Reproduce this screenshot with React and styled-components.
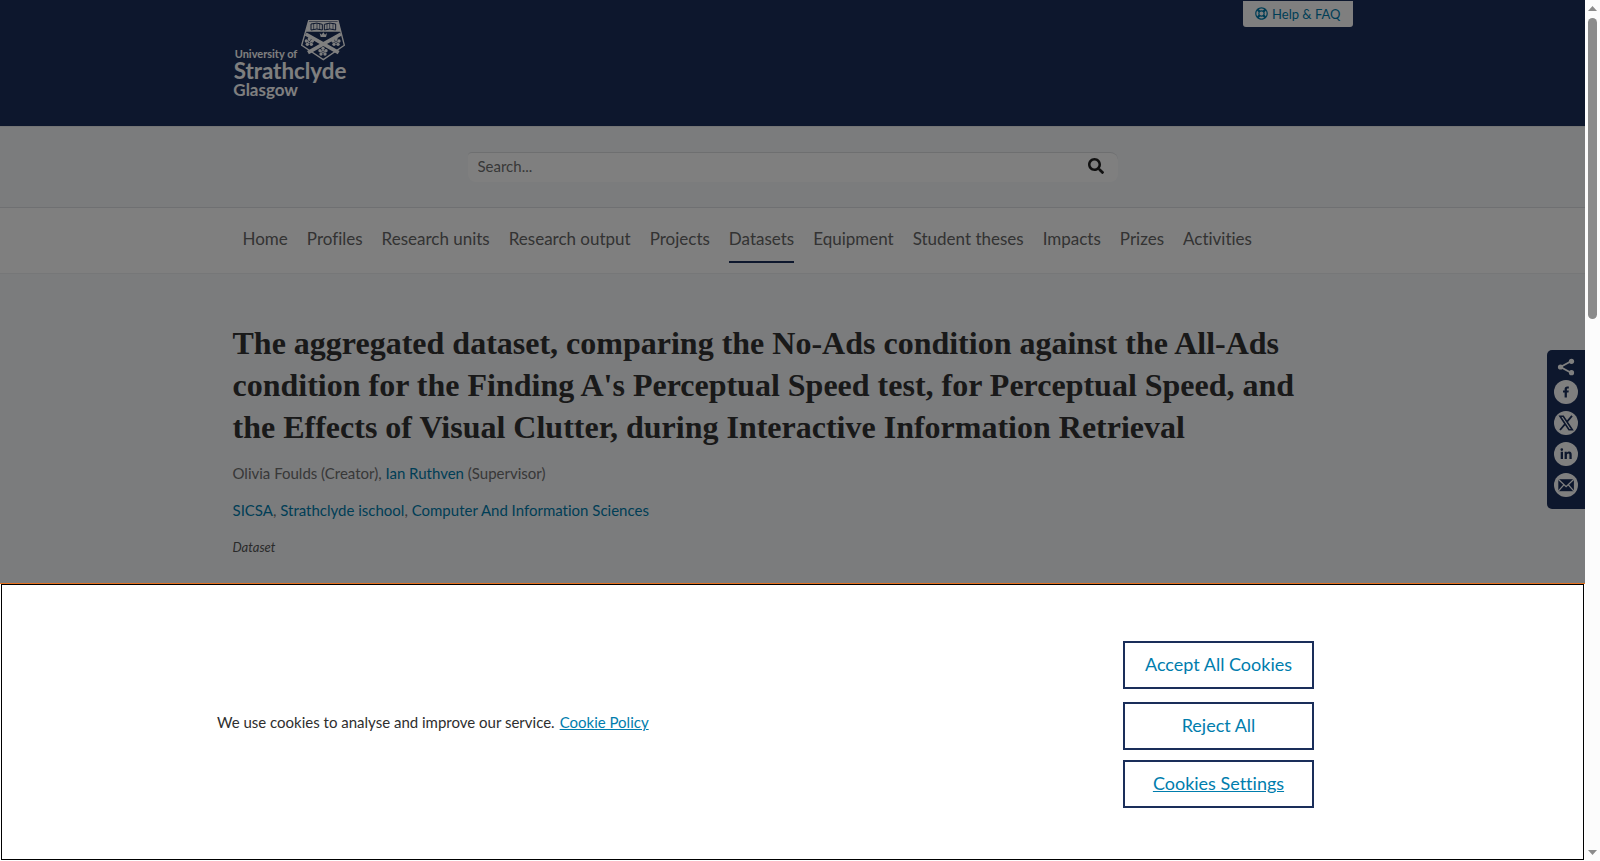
import React, { useState } from 'react';
import styled, { createGlobalStyle } from 'styled-components';
import { FaSearch, FaRegLifeRing } from 'react-icons/fa';

const GlobalStyle = createGlobalStyle`
  * {
    box-sizing: border-box;
  }

  body {
    margin: 0;
    overflow: hidden;
    font-family: Lato, 'Open Sans', sans-serif;
    font-size: 15px;
    font-variant-ligatures: none;
    color: #707070;
  }
`;

const Frame = styled.div`
  display: flex;
  height: 100vh;
`;

const Page = styled.div`
  position: relative;
  flex: 1;
  min-width: 0;
  overflow: hidden;
  background-color: #f6f8fb;
`;

const Container = styled.div`
  max-width: 1120px;
  margin: 0 auto;
`;

const Header = styled.header`
  height: 126px;
  padding-top: 1px;
  background-color: #1a2e5a;
`;

const HeaderRow = styled(Container)`
  display: flex;
  justify-content: space-between;
  align-items: flex-start;
`;

const LogoLink = styled.a`
  display: block;
  padding-top: 17px;
`;

const HelpLink = styled.a`
  display: flex;
  align-items: center;
  gap: 4px;
  height: 26px;
  padding: 0 12px 1px;
  border-radius: 0 0 3px 3px;
  background-color: #fff;
  color: #007dad;
  font-size: 13px;
  line-height: 20px;
  text-decoration: none;
`;

const SearchBand = styled.section`
  padding: 25px 0;
  border-top: 1px solid #e6e8eb;
  border-bottom: 1px solid #dfe1e4;
`;

const SearchForm = styled.form`
  display: flex;
  width: 650px;
  height: 30px;
  margin: 0 auto;
  padding-bottom: 3px;
  border-top: 1px solid #dcdee1;
  border-radius: 4px 8px 8px 8px;
  background-color: #fff;
`;

const SearchInput = styled.input`
  flex: 1;
  padding: 0 10px;
  border: 0;
  background: none;
  font-family: inherit;
  font-size: 15px;

  &::placeholder {
    color: #707070;
    opacity: 1;
  }
`;

const SearchButton = styled.button`
  display: flex;
  align-items: center;
  padding: 0 14px;
  border: 0;
  background: none;
  color: #222;
  cursor: pointer;
`;

const Nav = styled.nav`
  background-color: #fff;
  border-bottom: 1px solid #eceef0;
`;

const NavList = styled(Container).attrs({ as: 'ul' })`
  display: flex;
  gap: 19px;
  height: 65px;
  padding: 0 10px;
  list-style: none;
`;

const NavLink = styled.a`
  display: block;
  height: 55px;
  padding-top: 20px;
  border-bottom: 2px solid ${(props) => (props.$active ? '#1a2e5a' : 'transparent')};
  color: #666;
  font-size: 17px;
  line-height: 22px;
  text-decoration: none;
  white-space: nowrap;
`;

const Article = styled(Container).attrs({ as: 'main' })`
  padding-top: 48px;
`;

const Title = styled.h1`
  margin: 0 0 14px;
  color: #333;
  font-family: 'Liberation Serif', serif;
  font-size: 32px;
  font-weight: bold;
  line-height: 42px;
`;

const TitleLine = styled.span`
  display: block;
  white-space: nowrap;
`;

const Meta = styled.p`
  margin: 0 0 15px;
  line-height: 22px;
`;

const MetaLink = styled.a`
  color: #007dad;
  text-decoration: none;
`;

const Kind = styled(Meta)`
  color: #555;
  font-size: 13px;
  font-style: italic;
`;

const Share = styled.aside`
  position: absolute;
  top: 350px;
  right: 0;
  display: flex;
  flex-direction: column;
  align-items: center;
  gap: 1px;
  width: 38px;
  padding: 5px 0 12px;
  border-radius: 5px 0 0 5px;
  background-color: #1a2e5a;
`;

const ShareLinks = styled.div`
  display: flex;
  flex-direction: column;
  gap: 7px;
`;

const ShareLink = styled.a`
  display: block;
  height: 24px;
`;

const Overlay = styled.div`
  position: absolute;
  inset: 0;
  background-color: rgba(0, 0, 0, 0.5);
`;

const Banner = styled.section`
  position: absolute;
  right: 0;
  bottom: 0;
  left: 0;
  padding: 0 1px 1px;
  border-top: 1px solid #e9711c;
  background-color: #fff;
`;

const BannerBody = styled.div`
  display: flex;
  justify-content: space-between;
  align-items: center;
  padding: 56px 269px 51px 215px;
  border: 1px solid #000;
  color: #2e2e2e;
`;

const BannerText = styled.p`
  margin: 0 0 5px;
  line-height: 22px;
`;

const PolicyLink = styled.a`
  margin-left: 5px;
  color: #007dad;
`;

const BannerActions = styled.div`
  display: flex;
  flex-direction: column;
  gap: 10px;
  width: 191px;
`;

const ConsentButtons = styled.div`
  display: flex;
  flex-direction: column;
  gap: 13px;
`;

const BannerButton = styled.button`
  height: 48px;
  padding: 0 6px 2px;
  border: 2px solid #1a2e5a;
  background-color: #fff;
  color: #007dad;
  font-family: inherit;
  font-size: 18px;
  font-variant-ligatures: none;
  text-decoration: ${(props) => (props.$underlined ? 'underline' : 'none')};
  cursor: pointer;
`;

const Scrollbar = styled.div`
  display: flex;
  flex-direction: column;
  align-items: center;
  width: 15px;
  padding: 6px 0;
  background-color: #fcfcfc;
`;

const Thumb = styled.div`
  width: 9px;
  height: 301px;
  margin: 7px 0 auto;
  border-radius: 5px;
  background-color: #8b8b8b;
`;

const navItems = [
  'Home',
  'Profiles',
  'Research units',
  'Research output',
  'Projects',
  'Datasets',
  'Equipment',
  'Student theses',
  'Impacts',
  'Prizes',
  'Activities',
];

const Logo = () => (
  <svg width="120" height="90" viewBox="39 24 360 270" role="img" aria-label="University of Strathclyde Glasgow">
    <g fill="#fff" fontFamily="Lato, sans-serif" fontWeight="700">
      <text x="44" y="144" fontSize="33">University of</text>
      <text x="41" y="207" fontSize="67">Strathclyde</text>
      <text x="40" y="258" fontSize="51">Glasgow</text>
    </g>
    <path d="M266 32H354L373 106L310 149L245 106Z" fill="none" stroke="#fff" strokeWidth="4" />
    <path d="M265 35H355L363 65H257Z" fill="#fff" />
    <path
      d="M273 42Q291 36 307 43V60Q291 54 273 60ZM313 43Q329 36 347 42V60Q329 54 313 60Z"
      fill="none"
      stroke="#1a2e5a"
      strokeWidth="3"
    />
    <path d="M281 40V58M291 39V57M299 40V58M321 40V58M329 39V57M339 40V58" stroke="#1a2e5a" strokeWidth="2" />
    <path d="M257 72L356 128M363 72L264 128" stroke="#fff" strokeWidth="11" />
    <path d="M299 69L305 74L310 67L315 74L321 69L318 81H302Z" fill="#fff" />
    {[[268, 95], [348, 95], [309, 124]].map(([x, y]) => (
      <g key={x} transform={`translate(${x} ${y})`} fill="#fff">
        <circle cx="0" cy="-9" r="5" />
        <circle cx="9" cy="-2" r="5" />
        <circle cx="6" cy="8" r="5" />
        <circle cx="-6" cy="8" r="5" />
        <circle cx="-9" cy="-2" r="5" />
        <circle r="5" />
        <circle r="2" fill="#1a2e5a" />
      </g>
    ))}
  </svg>
);

const ShareIcon = () => (
  <svg width="24" height="24" viewBox="0 0 24 24" aria-hidden="true">
    <path d="M17.5 6L6.5 12L17.5 18" fill="none" stroke="#fff" strokeWidth="1.8" />
    <circle cx="17.5" cy="6.3" r="2.6" fill="#fff" />
    <circle cx="6.5" cy="12" r="2.6" fill="#fff" />
    <circle cx="17.5" cy="17.7" r="2.6" fill="#fff" />
  </svg>
);

const shareTargets = [
  {
    name: 'Facebook',
    icon: (
      <path
        d="M10.6 17.5V12.6H9V10.5H10.6V9.2C10.6 7.4 11.6 6.4 13.3 6.4H14.8V8.4H13.8C13.1 8.4 12.9 8.7 12.9 9.3V10.5H14.8L14.5 12.6H12.9V17.5Z"
        fill="#1a2e5a"
      />
    ),
  },
  {
    name: 'X',
    icon: (
      <g fill="none" stroke="#1a2e5a">
        <path d="M18 4.8L6 19" strokeWidth="1.8" />
        <path d="M6 5.3H9.3L18.3 18.7H15Z" fill="#fff" strokeWidth="1.6" />
      </g>
    ),
  },
  {
    name: 'LinkedIn',
    icon: (
      <path
        d="M6.7 9.8H9V17H6.7ZM7.8 6.2A1.3 1.3 0 1 1 7.8 8.9A1.3 1.3 0 1 1 7.8 6.2ZM10.6 9.8H12.8V10.8C13.3 10 14.1 9.6 15 9.6C17.2 9.6 17.7 11 17.7 13V17H15.4V13.4C15.4 12.4 15.3 11.6 14.3 11.6C13.3 11.6 12.9 12.3 12.9 13.4V17H10.6Z"
        fill="#1a2e5a"
      />
    ),
  },
  {
    name: 'Email',
    icon: (
      <>
        <rect x="4.3" y="6.2" width="15.6" height="12" fill="#1a2e5a" />
        <path
          d="M4.3 6.2L12.1 13.7L19.9 6.2M4.3 18.2L9.8 11.8M19.9 18.2L14.4 11.8"
          fill="none"
          stroke="#fff"
          strokeWidth="1.3"
        />
      </>
    ),
  },
];

const App = () => {
  const [query, setQuery] = useState('');

  const handleSubmit = (event) => {
    event.preventDefault();
  };

  return (
    <Frame>
      <GlobalStyle />
      <Page>
        <Header>
          <HeaderRow>
            <LogoLink href="#home">
              <Logo />
            </LogoLink>
            <HelpLink href="#help">
              <FaRegLifeRing size={13} aria-hidden="true" />
              Help &amp; FAQ
            </HelpLink>
          </HeaderRow>
        </Header>

        <SearchBand>
          <SearchForm role="search" onSubmit={handleSubmit}>
            <SearchInput
              type="text"
              aria-label="Search"
              placeholder="Search..."
              value={query}
              onChange={(e) => setQuery(e.target.value)}
            />
            <SearchButton type="submit" aria-label="Submit search">
              <FaSearch size={16} />
            </SearchButton>
          </SearchForm>
        </SearchBand>

        <Nav>
          <NavList>
            {navItems.map((item) => (
              <li key={item}>
                <NavLink href="#nav" $active={item === 'Datasets'}>
                  {item}
                </NavLink>
              </li>
            ))}
          </NavList>
        </Nav>

        <Article>
          <Title>
            <TitleLine>The aggregated dataset, comparing the No-Ads condition against the All-Ads </TitleLine>
            <TitleLine>condition for the Finding A's Perceptual Speed test, for Perceptual Speed, and </TitleLine>
            <TitleLine>the Effects of Visual Clutter, during Interactive Information Retrieval</TitleLine>
          </Title>
          <Meta>
            Olivia Foulds (Creator), <MetaLink href="#ruthven">Ian Ruthven</MetaLink> (Supervisor)
          </Meta>
          <Meta>
            <MetaLink href="#sicsa">SICSA</MetaLink>, <MetaLink href="#ischool">Strathclyde ischool</MetaLink>,{' '}
            <MetaLink href="#cis">Computer And Information Sciences</MetaLink>
          </Meta>
          <Kind>Dataset</Kind>
        </Article>

        <Share aria-label="Share">
          <ShareIcon />
          <ShareLinks>
            {shareTargets.map((target) => (
              <ShareLink key={target.name} href="#share" aria-label={target.name}>
                <svg width="24" height="24" viewBox="0 0 24 24" aria-hidden="true">
                  <circle cx="12" cy="12" r="12" fill="#fff" />
                  {target.icon}
                </svg>
              </ShareLink>
            ))}
          </ShareLinks>
        </Share>

        <Overlay />

        <Banner aria-label="Cookie notice">
          <BannerBody>
            <BannerText>
              We use cookies to analyse and improve our service.
              <PolicyLink href="#cookies">Cookie Policy</PolicyLink>
            </BannerText>
            <BannerActions>
              <ConsentButtons>
                <BannerButton type="button">Accept All Cookies</BannerButton>
                <BannerButton type="button">Reject All</BannerButton>
              </ConsentButtons>
              <BannerButton type="button" $underlined>
                Cookies Settings
              </BannerButton>
            </BannerActions>
          </BannerBody>
        </Banner>
      </Page>

      <Scrollbar aria-hidden="true">
        <svg width="9" height="5" viewBox="0 0 9 5">
          <path d="M0 5L4.5 0L9 5Z" fill="#8b8b8b" />
        </svg>
        <Thumb />
        <svg width="9" height="5" viewBox="0 0 9 5">
          <path d="M0 0L4.5 5L9 0Z" fill="#8b8b8b" />
        </svg>
      </Scrollbar>
    </Frame>
  );
};

export default App;
